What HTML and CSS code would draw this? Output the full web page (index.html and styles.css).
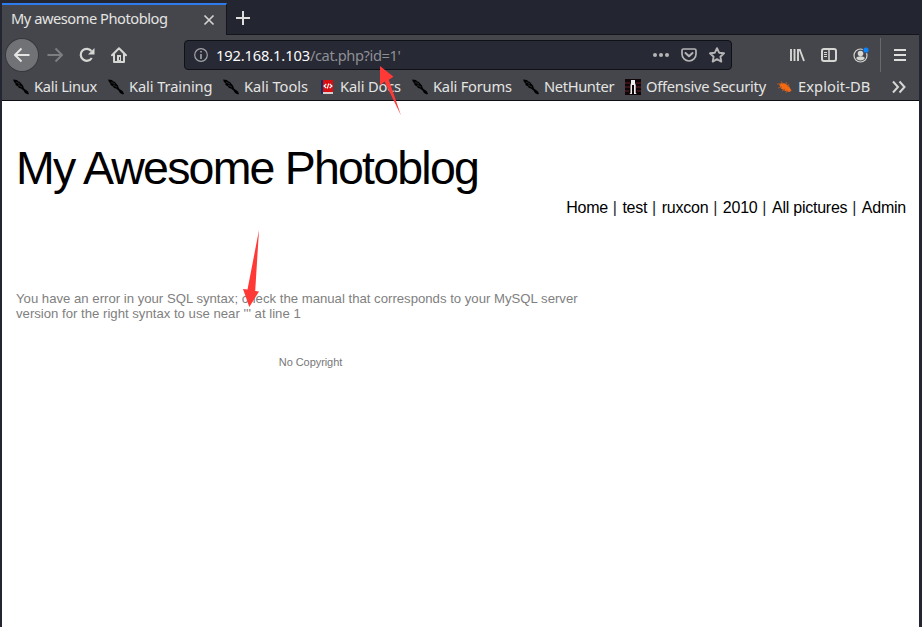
FILE: index.html
```html
<!DOCTYPE html>
<html lang="en">
<head>
<meta charset="utf-8">
<title>My awesome Photoblog</title>
<link rel="stylesheet" href="styles.css">
</head>
<body>
<svg class="defs" width="0" height="0">
  <symbol id="dragon" viewBox="0 0 16 16">
    <path fill="#000" d="M0 .5L4 1 5 2.200 7 3 8.500 5 10 6.500 11 9.500 13 11 14.500 12 16 14.500 15 15.500 12 14 10.500 11.500 8 9.500 6 9 5 7.500 2.500 6 2.500 4.500 1 3Z"/>
    <path fill="none" stroke="#44464c" stroke-width=".6" d="M3 3l4 2M5 6l4 2"/>
  </symbol>
</svg>
<div class="window">
  <div class="tabs">
    <div class="tab"><span class="tab-title">My awesome Photoblog</span>
      <svg width="12" height="12" viewBox="0 0 12 12"><path d="M1.500 1.500l9 9M10.500 1.500l-9 9" stroke="#d3d3d1" stroke-width="1.700" fill="none"/></svg>
    </div>
    <svg class="plus" width="16" height="16" viewBox="0 0 16 16"><path d="M8 1v14M1 8h14" stroke="#dededc" stroke-width="2" fill="none"/></svg>
  </div>
  <div class="toolbar">
    <div class="back"><svg width="16" height="16" viewBox="0 0 16 16"><path d="M15.500 8H1M7.500 1.500L1 8l6.500 6.500" stroke="#e4e4e2" stroke-width="2" fill="none" stroke-linejoin="round"/></svg></div>
    <svg class="forward" width="16" height="16" viewBox="0 0 16 16"><path d="M.5 8H15M8.500 1.500L15 8l-6.500 6.500" stroke="#7d7e80" stroke-width="2" fill="none" stroke-linejoin="round"/></svg>
    <svg class="reload" width="16" height="16" viewBox="0 0 16 16"><path d="M12.800 11A6 6 0 1 1 12.400 4" stroke="#d6d6d3" stroke-width="2.200" fill="none"/><path d="M15.500 1v6.500H9Z" fill="#d6d6d3"/></svg>
    <svg class="home" width="16" height="16" viewBox="0 0 16 16"><path d="M1 8.200L8 1.200l7 7M3 7v8h10V7" stroke="#d6d6d3" stroke-width="2" fill="none" stroke-linejoin="round" stroke-linecap="round"/><path d="M6 8h4v7H6z" fill="#d6d6d3"/><path d="M8 10h1v3H8z" fill="#44464c"/></svg>
    <div class="address">
      <svg width="14" height="14" viewBox="0 0 14 14"><circle cx="7" cy="7" r="6.300" stroke="#a3a4a8" stroke-width="1.200" fill="none"/><path d="M6.200 3h1.600v1.600H6.200zM6.200 6h1.600v5H6.200z" fill="#a3a4a8"/></svg>
      <span class="url"><b>192.168.1.103</b>/cat.php?id=1'</span>
      <svg width="16" height="16" viewBox="0 0 16 16" fill="#b5b5b5"><circle cx="2" cy="8" r="2"/><circle cx="8" cy="8" r="2"/><circle cx="14" cy="8" r="2"/></svg>
      <svg width="16" height="16" viewBox="0 0 16 16" fill="none" stroke="#b5b5b5" stroke-width="2"><path d="M2.500 2h11q1.500 0 1.500 1.500V7A7 7 0 0 1 1 7V3.500Q1 2 2.500 2Z" stroke-width="1.700"/><path d="M4.500 6L8 9.300 11.500 6" stroke-linecap="round" stroke-linejoin="round"/></svg>
      <svg width="16" height="16" viewBox="0 0 16 16"><path d="M8 1.200l2.100 4.500 4.900.6-3.600 3.400.9 4.900L8 12.200l-4.300 2.400.9-4.900L1 6.300l4.900-.6Z" fill="none" stroke="#b5b5b5" stroke-width="1.900" stroke-linejoin="round"/></svg>
    </div>
    <div class="actions">
      <svg width="16" height="16" viewBox="0 0 16 16" stroke="#d6d6d3" stroke-width="2" fill="none"><path d="M2 2v12M5.500 2v12M9 2v12M10.500 2l4.500 12" stroke-width="1.900"/></svg>
      <svg width="16" height="16" viewBox="0 0 16 16" stroke="#d6d6d3" fill="none"><rect x="1" y="2" width="14" height="12" rx="2" stroke-width="2"/><path d="M8 2v12" stroke-width="1.500"/><path d="M3 5.500h3M3 7.500h3M3 9.500h3"/></svg>
      <svg width="16" height="16" viewBox="0 0 16 16"><circle cx="7.500" cy="8.500" r="6.500" fill="none" stroke="#d6d6d3" stroke-width="1.200"/><circle cx="7.500" cy="6.500" r="2.800" fill="#d6d6d3"/><path d="M3 11q1-1.700 4.500-1.700T12 11q-1.500 2.500-4.500 2.500T3 11Z" fill="#d6d6d3"/><circle cx="13" cy="3" r="3.300" fill="#44464c"/><circle cx="13" cy="3" r="2.600" fill="#0a84ff"/></svg>
    </div>
    <div class="menu"><svg width="12" height="12" viewBox="0 0 12 12"><path d="M0 1h12M0 6h12M0 11h12" stroke="#dededb" stroke-width="2"/></svg></div>
  </div>
  <div class="bookmarks">
    <div class="bm w1"><svg><use href="#dragon"/></svg><span>Kali Linux</span></div>
    <div class="bm w2"><svg><use href="#dragon"/></svg><span>Kali Training</span></div>
    <div class="bm w3"><svg><use href="#dragon"/></svg><span>Kali Tools</span></div>
    <div class="bm w4"><svg viewBox="0 0 16 16"><path d="M2 1h2.500v14H2z" fill="#182b63"/><path d="M4 1h10v12H4z" fill="#d90e12"/><path d="M4 13h10v2H4z" fill="#d8cdca"/><path d="M7.300 5L5 7l2.300 2M10.700 5L13 7l-2.300 2M9.700 4.500L8.300 9.500" stroke="#fff" stroke-width="1.100" fill="none"/></svg><span>Kali Docs</span></div>
    <div class="bm w5"><svg><use href="#dragon"/></svg><span>Kali Forums</span></div>
    <div class="bm w6"><svg><use href="#dragon"/></svg><span>NetHunter</span></div>
    <div class="bm w7"><svg viewBox="0 0 16 16"><path d="M0 0h16v16H0z" fill="#100608"/><path d="M0 4h5M11 4h5M0 8h5M11 8h5M0 12h4M12 12h4" stroke="#4a191c" stroke-width="1.500"/><path d="M6 1h4v3l.7 2v8l1 1H9V6H7v9H4.500l1-1V6L6 4Z" fill="#eee"/></svg><span>Offensive Security</span></div>
    <div class="bm w8"><svg viewBox="0 0 16 16"><path d="M2 5l3-1 3 .500 4 3 2.500 4-2 1.500-4-1-4.500-2.500Z" fill="#f36a13"/><path d="M4 2l2 3M9 3l1 3M0 5h4M1 9l4-1M5 12l3-2M9 14l1-3M12 5l-1 3" stroke="#a95728" fill="none"/></svg><span>Exploit-DB</span></div>
    <svg class="more" width="14" height="14" viewBox="0 0 14 14"><path d="M1 1.500L6 7l-5 5.500M7.500 1.500l5 5.500-5 5.500" stroke="#d6d6d3" stroke-width="2" fill="none"/></svg>
  </div>
  <main class="page">
    <h1>My Awesome Photoblog</h1>
    <nav><a>Home</a><i>|</i><a>test</a><i>|</i><a>ruxcon</a><i>|</i><a>2010</a><i>|</i><a>All pictures</a><i>|</i><a>Admin</a></nav>
    <p class="error">You have an error in your SQL syntax; check the manual that corresponds to your MySQL server<br>version for the right syntax to use near ''' at line 1</p>
    <footer>No Copyright</footer>
  </main>
</div>
<svg class="arrows" width="922" height="627" viewBox="0 0 922 627" fill="#ff3936"><path d="M380 66L393.500 76.800 388.800 79.700 401 115.500 384.500 81.500 380 85.500Z"/><path d="M259 230L255.200 291 259 291.500 249.300 307 243 289 247.500 289.500Z"/></svg>
</body>
</html>
```
FILE: styles.css
```css
* { box-sizing: border-box; }
body { margin: 0; width: 922px; height: 627px; overflow: hidden; background: #232530; font-family: "Noto Sans", sans-serif; font-size: 14.67px; color: #e4e4e2; }
svg { display: block; flex: none; }
.defs { position: absolute; }
.window { width: 917px; height: 627px; margin-left: 2px; display: flex; flex-direction: column; }
.tabs { height: 35px; padding-top: 3px; display: flex; align-items: stretch; border-bottom: 1px solid #15161c; }
.tab { width: 225px; height: 32px; margin-bottom: -1px; border-top: 2px solid #2e7bf0; border-right: 1px solid #15161c; background: #44464c; display: flex; align-items: center; justify-content: space-between; padding: 0 11px 0 9px; }
.tab-title { white-space: nowrap; line-height: 24px; padding-bottom: 4px; letter-spacing: -.47px; }
.plus { margin: 7px 0 0 8px; }
.toolbar { height: 40px; background: #44464c; display: flex; align-items: center; padding-left: 4px; }
.back { width: 32px; height: 32px; border-radius: 50%; background: #717276; box-shadow: 0 0 0 1px #37393e; display: flex; align-items: center; justify-content: center; }
.forward { margin-left: 9px; }
.reload, .home { margin-left: 16px; }
.address { width: 548px; height: 30px; margin-left: 57px; border: 1px solid #101116; border-radius: 4px; background: #272935; display: flex; align-items: center; gap: 12px; padding: 0 6px 0 9px; }
.url { flex: 1; margin-left: -4px; white-space: nowrap; color: #8f9094; letter-spacing: -.42px; }
.url b { font-weight: 400; color: #fbfbfb; letter-spacing: -.13px; }
.actions { display: flex; gap: 16px; margin-left: 57px; }
.menu { width: 38px; height: 34px; margin-left: 11px; border-left: 1px solid #68696d; display: flex; align-items: center; padding-left: 13px; }
.bookmarks { height: 26px; background: #44464c; border-bottom: 1px solid #0d0e12; display: flex; align-items: center; padding: 0 0 2px 11px; }
.bm { display: flex; align-items: center; gap: 5px; white-space: nowrap; flex: none; line-height: 20px; }
.bm svg { width: 16px; height: 16px; }
.bm span { margin-top: -2px; }
.w1 { width: 95px; letter-spacing: -.3px; }
.w2 { width: 115px; letter-spacing: -.1px; }
.w3 { width: 96px; letter-spacing: -.03px; }
.w4 { width: 93px; letter-spacing: -.15px; }
.w5 { width: 111px; letter-spacing: -.2px; }
.w6 { width: 102px; letter-spacing: -.35px; }
.w7 { width: 152px; letter-spacing: -.24px; }
.w8 { width: 115px; letter-spacing: .08px; }
.page { flex: 1; background: #fff; font-family: "Liberation Sans", Arial, sans-serif; color: #000; padding: 40px 13px 0 14px; }
h1 { margin: 0; font-size: 46.500px; font-weight: 400; line-height: 54px; letter-spacing: -1.800px; white-space: nowrap; }
nav { margin-top: 3px; display: flex; justify-content: flex-end; line-height: 20px; font-size: 16px; white-space: nowrap; letter-spacing: -.24px; }
nav i { font-style: normal; width: 14.500px; padding-left: 4.800px; color: #24292d; }
.error { margin: 73px 0 0; font-size: 13.170px; line-height: 15px; color: #808080; white-space: nowrap; }
footer { width: 589px; margin-top: 34px; text-align: center; font-size: 11px; line-height: 14px; color: #777; letter-spacing: -.06px; }
.arrows { position: absolute; left: 0; top: 0; }
```
